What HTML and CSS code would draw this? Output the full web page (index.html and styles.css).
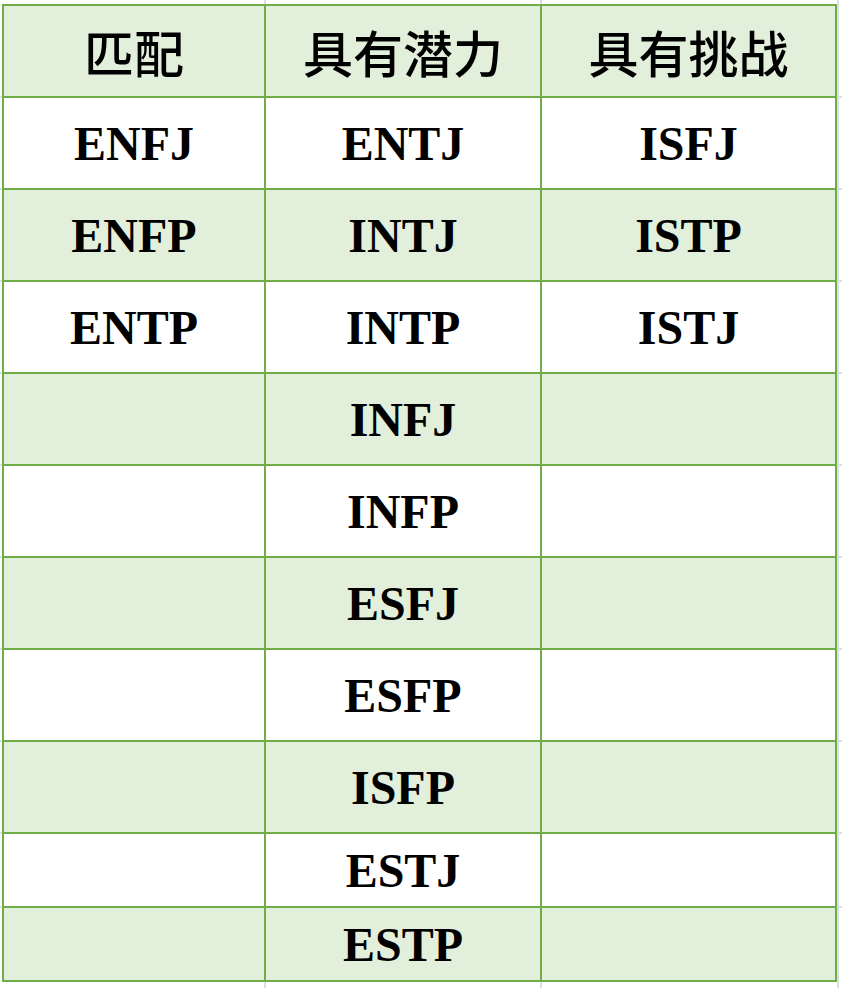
FILE: index.html
```html
<!DOCTYPE html>
<html lang="zh">
<head>
<meta charset="utf-8">
<link rel="stylesheet" href="styles.css">
</head>
<body>
<div class="sheet">
  <div class="grid">
    <div class="cell head">匹配</div><div class="cell head">具有潜力</div><div class="cell head">具有挑战</div>
    <div class="cell">ENFJ</div><div class="cell">ENTJ</div><div class="cell">ISFJ</div>
    <div class="cell g">ENFP</div><div class="cell g">INTJ</div><div class="cell g">ISTP</div>
    <div class="cell">ENTP</div><div class="cell">INTP</div><div class="cell">ISTJ</div>
    <div class="cell g"></div><div class="cell g">INFJ</div><div class="cell g"></div>
    <div class="cell"></div><div class="cell">INFP</div><div class="cell"></div>
    <div class="cell g"></div><div class="cell g">ESFJ</div><div class="cell g"></div>
    <div class="cell"></div><div class="cell">ESFP</div><div class="cell"></div>
    <div class="cell g"></div><div class="cell g">ISFP</div><div class="cell g"></div>
    <div class="cell"></div><div class="cell">ESTJ</div><div class="cell"></div>
    <div class="cell g"></div><div class="cell g">ESTP</div><div class="cell g"></div>
  </div>
</div>
</body>
</html>
```
FILE: styles.css
```css
html, body {
  margin: 0;
  padding: 0;
  background: #ffffff;
}
.sheet {
  width: 842px;
  height: 988px;
  box-sizing: border-box;
  padding: 4px 0 0 2px;
  --gl: #d8deea;
  background:
    linear-gradient(var(--gl), var(--gl)) 264px 0 / 2px 100% no-repeat,
    linear-gradient(var(--gl), var(--gl)) 540px 0 / 2px 100% no-repeat,
    linear-gradient(var(--gl), var(--gl)) 837px 0 / 2px 100% no-repeat,
    linear-gradient(var(--gl), var(--gl)) 0 96px / 100% 2px no-repeat,
    linear-gradient(var(--gl), var(--gl)) 0 188px / 100% 2px no-repeat,
    linear-gradient(var(--gl), var(--gl)) 0 280px / 100% 2px no-repeat,
    linear-gradient(var(--gl), var(--gl)) 0 372px / 100% 2px no-repeat,
    linear-gradient(var(--gl), var(--gl)) 0 464px / 100% 2px no-repeat,
    linear-gradient(var(--gl), var(--gl)) 0 556px / 100% 2px no-repeat,
    linear-gradient(var(--gl), var(--gl)) 0 648px / 100% 2px no-repeat,
    linear-gradient(var(--gl), var(--gl)) 0 740px / 100% 2px no-repeat,
    linear-gradient(var(--gl), var(--gl)) 0 832px / 100% 2px no-repeat,
    linear-gradient(var(--gl), var(--gl)) 0 906px / 100% 2px no-repeat,
    #ffffff;
}
.grid {
  display: grid;
  width: max-content;
  grid-template-columns: 262px 276px 295px;
  grid-template-rows: repeat(9, 92px) 74px 74px;
  border-left: 2px solid #70ad47;
  border-top: 2px solid #70ad47;
  background: #ffffff;
}
.cell {
  box-sizing: border-box;
  border-right: 2px solid #70ad47;
  border-bottom: 2px solid #70ad47;
  display: flex;
  align-items: center;
  justify-content: center;
  font-family: "Liberation Serif", "Noto Sans CJK SC", serif;
  font-weight: 700;
  font-size: 48px;
  color: #000000;
  background: #ffffff;
}
.cell.g, .cell.head {
  background: #e2efda;
}
.cell.head {
  font-family: "Noto Sans CJK SC", sans-serif;
  font-weight: 500;
  font-size: 50px;
}
```
